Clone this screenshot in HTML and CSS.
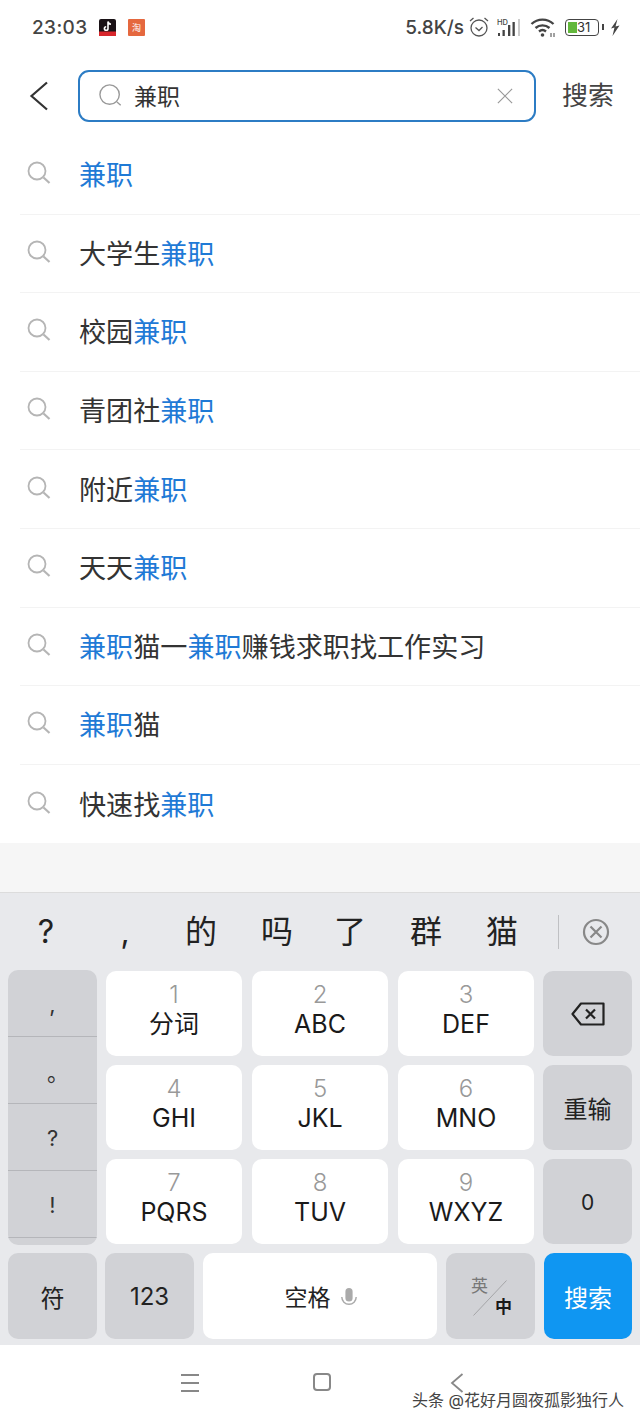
FILE: index.html
```html
<!DOCTYPE html>
<html lang="zh-CN">
<head>
    <meta charset="UTF-8">
    <meta name="viewport" content="width=device-width, initial-scale=1.0">
    <title>搜索</title>
    <link rel="stylesheet" href="styles.css">
</head>
<body>
    <div class="phone">
        <div class="status-bar">
            <span class="time">23:03</span>
            <svg class="app-icon first" viewBox="0 0 17 17">
                <rect width="17" height="17" rx="2" fill="#1a1216"/>
                <rect y="12.5" width="17" height="4.5" fill="#d8262c"/>
                <path d="M9 2.500v7a1.800 1.800 0 1 1-1.800-1.800M9 2.500c.3 1.600 1.300 2.500 3 2.700" fill="none" stroke="#fff" stroke-width="1.600"/>
            </svg>
            <div class="app-icon taobao">淘</div>
            <div class="status-right">
                <span class="speed">5.8K/s</span>
                <svg class="alarm" viewBox="0 0 22 22" fill="none" stroke="#555" stroke-width="1.300">
                    <circle cx="11" cy="12" r="8"/>
                    <path d="M7.500 11.500l3.500 3 3.500-3.500M2 5l3.500-3M20 5l-3.500-3"/>
                </svg>
                <svg class="signal" viewBox="0 0 24 18">
                    <text x="0" y="6.500" class="hd">HD</text>
                    <rect x="1" y="15" width="2" height="3" fill="#444"/>
                    <rect x="5.500" y="12" width="2.300" height="6" fill="#444"/>
                    <rect x="11" y="7" width="2.300" height="11" fill="#444"/>
                    <rect x="15.500" y="4" width="2.300" height="14" fill="#444"/>
                    <rect x="21" y="1" width="2" height="17" fill="#ccc"/>
                </svg>
                <svg class="wifi" viewBox="0 0 27 22" fill="none" stroke="#444" stroke-width="2.400">
                    <path d="M1.500 8a16 16 0 0 1 22 0M5.500 12a10.500 10.500 0 0 1 14 0M9 15.500a5.500 5.500 0 0 1 7 0"/>
                    <circle cx="12.500" cy="19" r="1.800" fill="#444" stroke="none"/>
                    <path d="M21 17v4M24 17v4" stroke-width="1"/>
                </svg>
                <div class="battery">
                    <div class="battery-level"></div>
                    <span class="battery-num">31</span>
                </div>
                <div class="battery-tip"></div>
                <svg class="bolt" viewBox="0 0 10 17"><path d="M7.500 0L1 9.500l3.500-1L2.500 17 9.500 6.500 5.500 7.500z" fill="#444"/></svg>
            </div>
        </div>

        <div class="search-bar">
            <svg class="back" viewBox="0 0 20 30" fill="none" stroke="#333" stroke-width="2.200"><path d="M18 1.500L2.500 15 18 28.500"/></svg>
            <div class="search-box">
                <svg class="box-lens" viewBox="0 0 26 26" fill="none" stroke="#999" stroke-width="1.500">
                    <circle cx="11.500" cy="11.500" r="10.500"/>
                    <path d="M19.500 19.500l4 3.500"/>
                </svg>
                <span class="search-text">兼职</span>
                <svg class="clear" viewBox="0 0 18 18" fill="none" stroke="#999" stroke-width="1.300"><path d="M1 1l16 16M17 1L1 17"/></svg>
            </div>
            <span class="search-btn">搜索</span>
        </div>

        <ul class="results">
            <li><svg class="lens" viewBox="0 0 24 24"><use href="#lens"/></svg><span><em>兼职</em></span></li>
            <li><svg class="lens" viewBox="0 0 24 24"><use href="#lens"/></svg><span>大学生<em>兼职</em></span></li>
            <li><svg class="lens" viewBox="0 0 24 24"><use href="#lens"/></svg><span>校园<em>兼职</em></span></li>
            <li><svg class="lens" viewBox="0 0 24 24"><use href="#lens"/></svg><span>青团社<em>兼职</em></span></li>
            <li><svg class="lens" viewBox="0 0 24 24"><use href="#lens"/></svg><span>附近<em>兼职</em></span></li>
            <li><svg class="lens" viewBox="0 0 24 24"><use href="#lens"/></svg><span>天天<em>兼职</em></span></li>
            <li><svg class="lens" viewBox="0 0 24 24"><use href="#lens"/></svg><span><em>兼职</em>猫一<em>兼职</em>赚钱求职找工作实习</span></li>
            <li><svg class="lens" viewBox="0 0 24 24"><use href="#lens"/></svg><span><em>兼职</em>猫</span></li>
            <li><svg class="lens" viewBox="0 0 24 24"><use href="#lens"/></svg><span>快速找<em>兼职</em></span></li>
        </ul>
        <svg class="defs" width="0" height="0">
            <symbol id="lens" viewBox="0 0 24 24">
                <g fill="none" stroke="#b5b5b5" stroke-width="1.800">
                    <circle cx="10" cy="10" r="8.500"/>
                    <path d="M16.500 16.500l6 5.500" stroke-width="2.200"/>
                </g>
            </symbol>
        </svg>

        <div class="gap"></div>

        <div class="keyboard">
            <div class="candidates">
                <span class="cand">?</span>
                <span class="cand cand-shift">,</span>
                <span class="cand cand-shift">的</span>
                <span class="cand cand-shift">吗</span>
                <span class="cand">了</span>
                <span class="cand">群</span>
                <span class="cand">猫</span>
                <div class="cand-divider"></div>
                <svg class="cand-close" viewBox="0 0 28 28" fill="none" stroke="#888" stroke-width="2.200">
                    <circle cx="14" cy="14" r="12"/>
                    <path d="M8.500 8.500l11 11M19.500 8.500l-11 11"/>
                </svg>
            </div>
            <div class="key-main">
                <div class="punct">
                    <span>,</span>
                    <span class="punct-stop">。</span>
                    <span>?</span>
                    <span>!</span>
                    <span class="punct-end"></span>
                </div>
                <div class="num-grid">
                    <div class="key"><small>1</small><b>分词</b></div>
                    <div class="key"><small>2</small><b>ABC</b></div>
                    <div class="key"><small>3</small><b>DEF</b></div>
                    <div class="key"><small>4</small><b>GHI</b></div>
                    <div class="key"><small>5</small><b>JKL</b></div>
                    <div class="key"><small>6</small><b>MNO</b></div>
                    <div class="key"><small>7</small><b>PQRS</b></div>
                    <div class="key"><small>8</small><b>TUV</b></div>
                    <div class="key"><small>9</small><b>WXYZ</b></div>
                </div>
                <div class="side">
                    <div class="key gray">
                        <svg class="del" viewBox="0 0 34 24" fill="none" stroke="#222" stroke-width="2.200">
                            <path d="M10 1.500h22.500v21H10L1.500 12z" stroke-linejoin="round"/>
                            <path d="M15 7.500l9 9M24 7.500l-9 9"/>
                        </svg>
                    </div>
                    <div class="key gray label">重输</div>
                    <div class="key gray label zero">0</div>
                </div>
            </div>
            <div class="key-bottom">
                <div class="key gray label w89 fu">符</div>
                <div class="key gray label w89">123</div>
                <div class="key label space">空格
                    <svg class="mic" viewBox="0 0 20 24">
                        <rect x="6" y="1" width="8" height="15" rx="4" fill="#aaa"/>
                        <path d="M2 11a8 8 0 0 0 16 0" fill="none" stroke="#aaa" stroke-width="1.600"/>
                    </svg>
                </div>
                <div class="key gray w89 lang">
                    <svg class="lang-slash" viewBox="0 0 34 36"><path d="M33.500 .5L.5 35.500" stroke="#a5a5a8" stroke-width="1"/></svg>
                    <span class="lang-en">英</span>
                    <span class="lang-zh">中</span>
                </div>
                <div class="key label go">搜索</div>
            </div>
        </div>

        <div class="nav-bar">
            <div class="nav-menu"><i></i><i></i><i></i></div>
            <div class="nav-home"></div>
            <svg class="nav-back" viewBox="0 0 14 20" fill="none" stroke="#888" stroke-width="1.800"><path d="M12.500 1L2 10l10.500 9"/></svg>
        </div>
        <div class="watermark">头条 @花好月圆夜孤影独行人</div>
    </div>
</body>
</html>
```

FILE: styles.css
```css
* {
    box-sizing: border-box;
}

body {
    margin: 0;
    background-color: #fff;
    color: #333;
    font-family: Inter, "Noto Sans CJK SC", sans-serif;
}

.phone {
    position: relative;
    width: 640px;
    height: 1422px;
    overflow: hidden;
    display: flex;
    flex-direction: column;
}

/* status bar */
.status-bar {
    height: 54px;
    margin-bottom: 2px;
    padding-left: 32px;
    display: flex;
    align-items: center;
    color: #444;
    flex-shrink: 0;
}

.time {
    font-size: 19px;
    font-weight: 500;
    letter-spacing: 0.4px;
    width: 67px;
}

.app-icon {
    width: 17px;
    height: 17px;
}

.app-icon.first {
    margin-right: 12px;
}

.taobao {
    background-color: #e5683f;
    border-radius: 1px;
    color: #fff;
    font-size: 9px;
    line-height: 17px;
    text-align: center;
}

.status-right {
    margin-left: auto;
    padding-right: 20px;
    display: flex;
    align-items: center;
}

.speed {
    font-size: 19px;
    font-weight: 500;
    margin-right: 4px;
}

.alarm {
    width: 22px;
    height: 22px;
    margin-right: 7px;
}

.signal {
    width: 24px;
    height: 18px;
    margin-right: 9px;
}

.hd {
    font-size: 7.500px;
    font-weight: 500;
    fill: #444;
}

.wifi {
    width: 27px;
    height: 22px;
    margin-right: 8px;
}

.battery {
    position: relative;
    width: 34px;
    height: 17px;
    padding: 2px;
    border: 1.500px solid #444;
    border-radius: 4px;
}

.battery-level {
    width: 9px;
    height: 100%;
    background-color: #63b83c;
}

.battery-num {
    position: absolute;
    top: -2px;
    left: 11px;
    font-size: 13px;
    line-height: 18px;
    color: #333;
}

.battery-tip {
    width: 2px;
    height: 6px;
    margin: 0 6px 0 3px;
    background-color: #444;
}

.bolt {
    width: 10px;
    height: 17px;
}

/* search header */
.search-bar {
    height: 79px;
    display: flex;
    align-items: flex-start;
    flex-shrink: 0;
}

.back {
    width: 20px;
    height: 30px;
    margin: 25px 0 0 29px;
}

.search-box {
    width: 458px;
    height: 52px;
    margin: 14px 0 0 29px;
    border: 2px solid #2c7cc4;
    border-radius: 11px;
    display: flex;
    align-items: center;
    padding-left: 19px;
}

.box-lens {
    width: 24px;
    height: 24px;
    margin-right: 11px;
}

.search-text {
    font-size: 23px;
    padding-bottom: 2px;
    color: #333;
}

.clear {
    width: 16px;
    height: 16px;
    margin-left: auto;
    margin-right: 21px;
}

.search-btn {
    margin: 23px 0 0 26px;
    font-size: 26px;
    line-height: 34px;
    color: #444;
}

/* suggestions */
.results {
    list-style: none;
    margin: 0;
    padding: 1px 0 0;
}

.results li {
    height: 78.600px;
    margin-left: 20px;
    display: flex;
    align-items: center;
    border-bottom: 1px solid #f3f3f3;
    font-size: 27.100px;
    color: #333;
}

.results li span {
    padding-bottom: 2px;
}

.results li:last-child {
    border-bottom: none;
}

.results em {
    font-style: normal;
    color: #1f7ad6;
}

.lens {
    width: 24px;
    height: 24px;
    margin: -3px 28px 0 7px;
}

.defs {
    position: absolute;
}

.gap {
    flex: 1;
    background-color: #f6f6f6;
    border-bottom: 1px solid #dcdcdc;
}

/* keyboard */
.keyboard {
    height: 452px;
    flex-shrink: 0;
    background-color: #e8e9ec;
    padding: 0 8px;
}

.candidates {
    height: 77px;
    display: flex;
    align-items: center;
}

.cand {
    width: 76px;
    font-size: 32px;
    line-height: 77px;
    text-align: center;
    color: #222;
}

.cand-shift {
    padding-left: 6px;
}

.cand-divider {
    width: 1px;
    height: 34px;
    margin-left: 18px;
    background-color: #bfc0c3;
}

.cand-close {
    width: 28px;
    height: 28px;
    margin-left: 23px;
}

.key-main {
    display: flex;
    gap: 9px;
    height: 275px;
}

.punct {
    width: 89px;
    border-radius: 10px;
    background-color: #d1d2d6;
    overflow: hidden;
    display: flex;
    flex-direction: column;
}

.punct span {
    height: 67px;
    flex-shrink: 0;
    padding-top: 3px;
    text-align: center;
    font-size: 22px;
    line-height: 63px;
    color: #333;
    border-bottom: 1px solid #b5b6ba;
}

.punct .punct-stop {
    padding-left: 11px;
    padding-top: 5px;
}

.punct .punct-end {
    height: 8px;
    padding: 0;
    border-bottom: none;
}

.num-grid {
    display: grid;
    grid-template-columns: repeat(3, 136px);
    grid-auto-rows: 85px;
    column-gap: 10px;
    row-gap: 9px;
    padding-top: 1px;
}

.key {
    background-color: #fff;
    border-radius: 10px;
    display: flex;
    flex-direction: column;
    align-items: center;
    justify-content: center;
    color: #222;
}

.num-grid .key {
    padding-bottom: 9px;
}

.key small {
    font-size: 24px;
    font-weight: 300;
    line-height: 29px;
    color: #999;
}

.key b {
    font-size: 25px;
    line-height: 30px;
    font-weight: 400;
    color: #1a1a1a;
}

.side {
    width: 89px;
    padding-top: 1px;
    display: flex;
    flex-direction: column;
    gap: 9px;
}

.side .key {
    height: 85px;
}

.gray {
    background-color: #d1d2d6;
}

.label {
    font-size: 24px;
}

.zero {
    font-size: 21px;
    padding-top: 2px;
}

.del {
    width: 34px;
    height: 24px;
}

.key-bottom {
    display: flex;
    gap: 9px;
    margin-top: 8px;
    height: 86px;
}

.w89 {
    width: 89px;
}

.fu {
    margin-right: -1px;
}

.space {
    width: 234px;
    padding-left: 2px;
    flex-direction: row;
    gap: 9px;
    font-size: 23px;
}

.mic {
    width: 18px;
    height: 22px;
    margin-top: 3px;
}

.lang {
    position: relative;
}

.lang-en {
    position: absolute;
    left: 25px;
    top: 23px;
    font-size: 17px;
    line-height: 20px;
    color: #777;
}

.lang-zh {
    position: absolute;
    left: 49px;
    top: 44px;
    font-size: 17px;
    line-height: 20px;
    font-weight: 700;
    color: #1a1a1a;
}

.lang-slash {
    position: absolute;
    left: 27px;
    top: 27px;
    width: 34px;
    height: 36px;
}

.go {
    width: 88px;
    background-color: #0f96f2;
    color: #fff;
}

/* bottom nav */
.nav-bar {
    height: 77px;
    flex-shrink: 0;
    background-color: #fff;
    position: relative;
    display: flex;
    align-items: flex-start;
    padding: 28px 0 0 181px;
}

.nav-menu {
    width: 18px;
    display: flex;
    flex-direction: column;
    gap: 6px;
    margin-top: 1px;
}

.nav-menu i {
    display: block;
    height: 2px;
    background-color: #888;
}

.nav-home {
    width: 18px;
    height: 18px;
    margin-left: 114px;
    border: 2px solid #888;
    border-radius: 4px;
}

.nav-back {
    width: 14px;
    height: 20px;
    margin-left: 119px;
}

.watermark {
    position: absolute;
    left: 412px;
    top: 1389px;
    font-size: 16px;
    line-height: 22px;
    color: #444;
    text-shadow: 0 0 2px #fff;
    white-space: nowrap;
}
```
